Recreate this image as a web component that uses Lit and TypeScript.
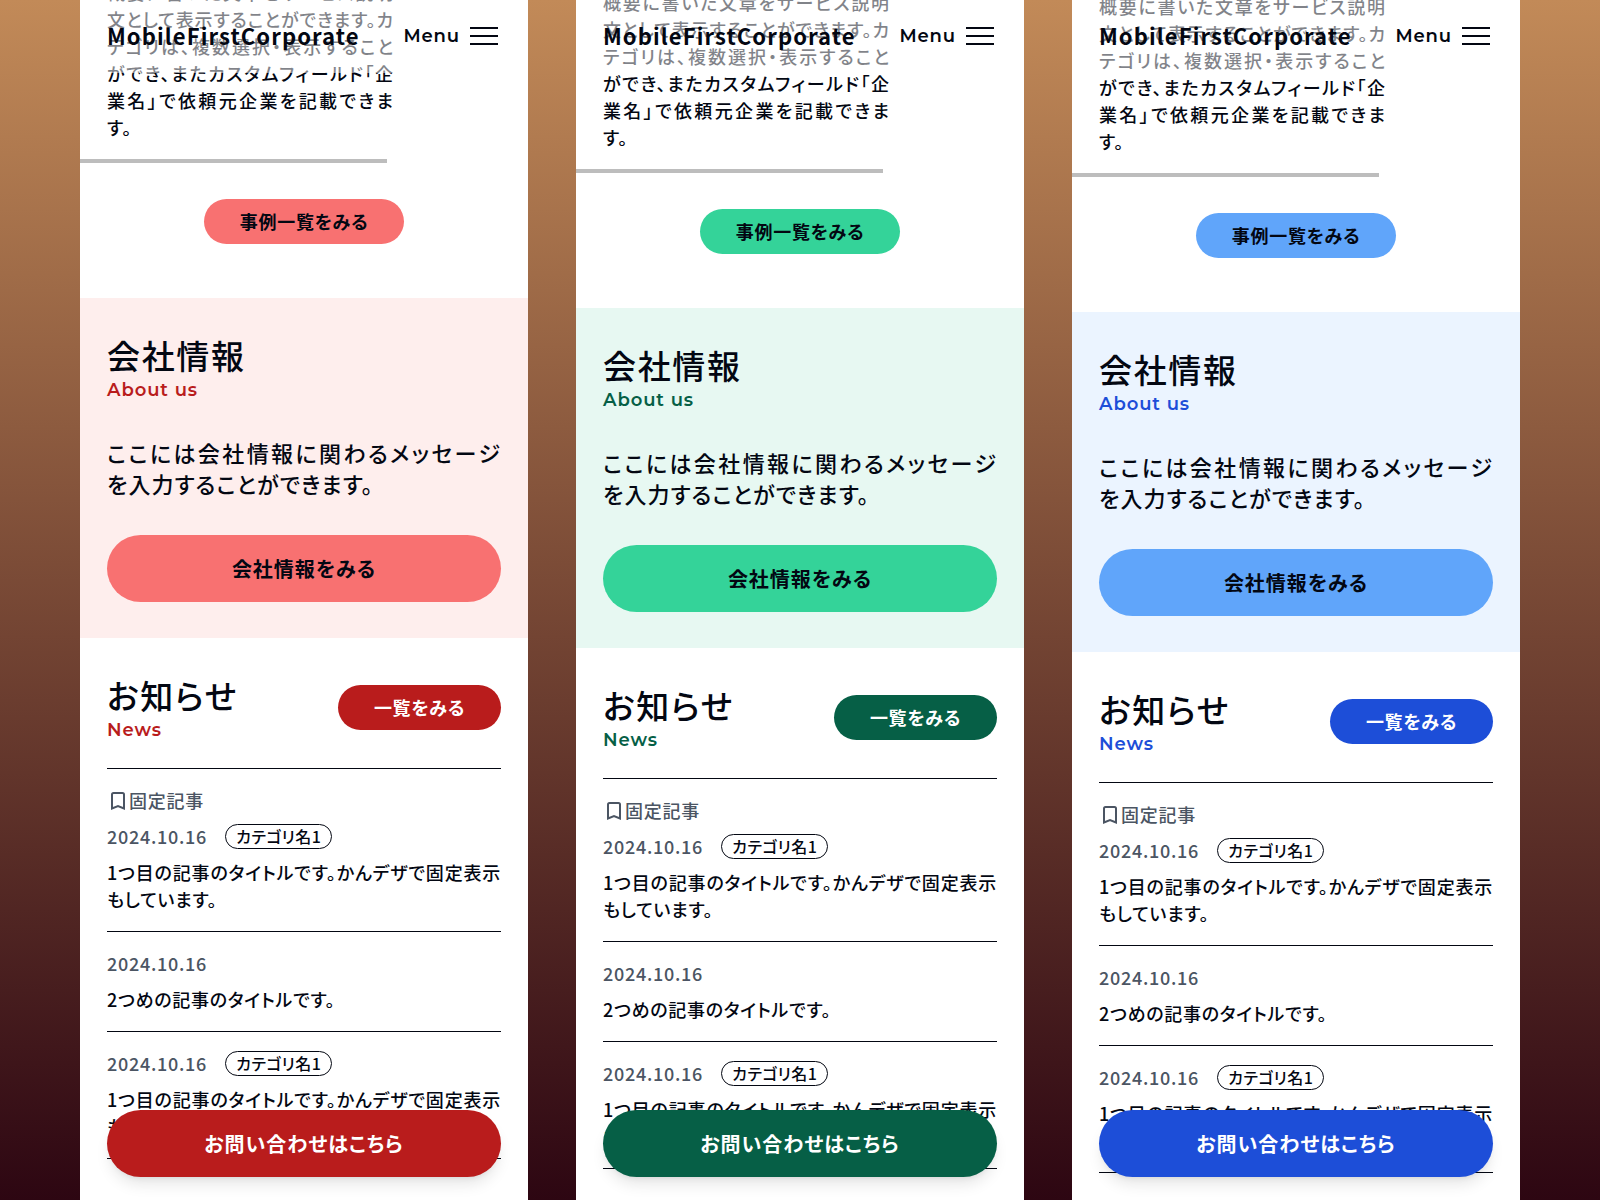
import { LitElement, html, css, nothing } from "lit";
import { customElement, property } from "lit/decorators.js";
import { styleMap } from "lit/directives/style-map.js";

interface Theme {
  name: string;
  scroll: number;
  soft: string;
  tint: string;
  deep: string;
}

interface Article {
  date: string;
  title: string;
  category?: string;
  pinned?: boolean;
}

const themes: Theme[] = [
  { name: "red", scroll: -21, soft: "#f87171", tint: "#feeeed", deep: "#b91c1c" },
  { name: "green", scroll: -11, soft: "#34d399", tint: "#e7f8f2", deep: "#065f46" },
  { name: "blue", scroll: -7, soft: "#60a5fa", tint: "#ebf4ff", deep: "#1d4ed8" },
];

const articles: Article[] = [
  { date: "2024.10.16", category: "カテゴリ名1", title: "1つ目の記事のタイトルです。かんデザで固定表示もしています。", pinned: true },
  { date: "2024.10.16", title: "2つめの記事のタイトルです。" },
  { date: "2024.10.16", category: "カテゴリ名1", title: "1つ目の記事のタイトルです。かんデザで固定表示もしています。" },
];

@customElement("phone-page")
export class PhonePage extends LitElement {
  @property({ attribute: false }) theme!: Theme;

  static styles = css`
    :host {
      display: block;
      position: relative;
      overflow: hidden;
      background: #fff;
      color: #030712;
      font-family: "Noto Sans CJK JP", "Noto Sans JP", sans-serif;
      font-size: 18px;
      font-weight: 500;
      line-height: 27px;
      letter-spacing: 0.04em;
      font-feature-settings: "palt";
    }
    a {
      color: inherit;
      text-decoration: none;
    }
    h1, h2, p, ul {
      margin: 0;
      padding: 0;
      font-weight: inherit;
    }
    .header {
      position: absolute;
      inset: 0 0 auto 0;
      z-index: 1;
      display: flex;
      align-items: center;
      justify-content: space-between;
      height: 73px;
      padding: 0 30px 2px 27px;
      box-sizing: border-box;
      background: rgb(255 255 255 / 0.5);
    }
    .header .logo {
      font-size: 22px;
      font-weight: 700;
      letter-spacing: 0.05em;
    }
    .latin, .menu {
      font-family: Montserrat, Inter, sans-serif;
      font-size: 18px;
      font-weight: 600;
      letter-spacing: 0.05em;
    }
    .menu {
      display: flex;
      align-items: center;
      gap: 10px;
      padding: 0;
      border: 0;
      background: none;
      color: inherit;
    }
    .bars {
      width: 28px;
      height: 20px;
    }
    .work {
      width: 287px;
      margin-left: 27px;
      letter-spacing: 0.05em;
      text-align: justify;
    }
    .track {
      width: 307px;
      height: 4px;
      margin-top: 18px;
      background: #bdbdbd;
    }
    .center {
      display: flex;
      justify-content: center;
      padding: 36px 0 54px;
    }
    .pill {
      display: flex;
      align-items: center;
      justify-content: center;
      box-sizing: border-box;
      height: 45px;
      padding: 0 36px;
      border-radius: 34px;
      font-weight: 700;
    }
    .large {
      height: 67px;
      font-size: 20px;
      letter-spacing: 0.05em;
    }
    .soft {
      background: var(--soft);
    }
    .deep {
      background: var(--deep);
      color: #fff;
    }
    .about {
      padding: 36px 27px;
      background: var(--tint);
    }
    .title {
      font-size: 33px;
      line-height: 42px;
      letter-spacing: 0.05em;
    }
    .latin {
      margin-top: 3px;
      color: var(--deep);
      line-height: 22px;
    }
    .message {
      margin: 36px 0;
      font-size: 22px;
      line-height: 31px;
      letter-spacing: 0.05em;
      text-align: justify;
    }
    .news {
      padding: 36px 27px;
    }
    .news-head {
      display: flex;
      align-items: center;
      justify-content: space-between;
      padding-bottom: 27px;
      border-bottom: 1px solid #030712;
    }
    .list {
      list-style: none;
    }
    .item {
      display: flex;
      flex-direction: column;
      gap: 9px;
      padding: 18px 0;
      border-bottom: 1px solid #030712;
    }
    .meta {
      display: flex;
      align-items: center;
      color: #4b5563;
    }
    .flag {
      width: 22px;
      height: 22px;
    }
    .category {
      margin-left: 18px;
      padding: 0 10px;
      border: 1px solid #030712;
      border-radius: 13px;
      color: #030712;
      font-size: 16px;
      line-height: 23px;
      letter-spacing: 0.03em;
    }
    .headline {
      text-align: justify;
    }
    .contact {
      position: absolute;
      inset: auto 27px 23px 27px;
      z-index: 1;
      box-shadow: 0 10px 15px -3px rgb(0 0 0 / 0.1), 0 4px 6px -4px rgb(0 0 0 / 0.1);
    }
  `;

  private renderArticle(a: Article) {
    return html`
      <li class="item">
        ${a.pinned
          ? html`<div class="meta">
              <svg class="flag" viewBox="0 0 22 22" fill="none" stroke="currentColor" stroke-width="2" aria-hidden="true">
                <path d="M5 18.500V4.500Q5 3 6.500 3H15.500Q17 3 17 4.500V18.500L11 16Z" />
              </svg>固定記事
            </div>`
          : nothing}
        <div class="meta">
          <time>${a.date}</time>
          ${a.category ? html`<span class="category">${a.category}</span>` : nothing}
        </div>
        <a class="headline" href="#news">${a.title}</a>
      </li>
    `;
  }

  render() {
    const t = this.theme;
    return html`
      <header class="header">
        <h1 class="logo"><a href="#top">MobileFirstCorporate</a></h1>
        <button class="menu" type="button">
          Menu
          <svg class="bars" viewBox="0 0 28 20" stroke="currentColor" stroke-width="2" aria-hidden="true">
            <path d="M0 2H28M0 10H28M0 18H28" />
          </svg>
        </button>
      </header>
      <main style=${styleMap({ marginTop: `${t.scroll}px` })}>
        <section>
          <p class="work">概要に書いた文章をサービス説明文として表示することができます。カテゴリは、複数選択・表示することができ、またカスタムフィールド「企業名」で依頼元企業を記載できます。</p>
          <div class="track"></div>
          <div class="center"><a class="pill soft" href="#works">事例一覧をみる</a></div>
        </section>
        <section class="about">
          <h2 class="title">会社情報</h2>
          <p class="latin">About us</p>
          <p class="message">ここには会社情報に関わるメッセージを入力することができます。</p>
          <a class="pill large soft" href="#about">会社情報をみる</a>
        </section>
        <section class="news">
          <div class="news-head">
            <div>
              <h2 class="title">お知らせ</h2>
              <p class="latin">News</p>
            </div>
            <a class="pill deep" href="#news">一覧をみる</a>
          </div>
          <ul class="list">${articles.map((a) => this.renderArticle(a))}</ul>
        </section>
      </main>
      <a class="pill large deep contact" href="#contact">お問い合わせはこちら</a>
    `;
  }
}

@customElement("app-root")
export class AppRoot extends LitElement {
  static styles = css`
    :host {
      display: grid;
      grid-template-columns: repeat(3, minmax(0, 1fr));
      grid-template-rows: minmax(0, 1fr);
      gap: 48px;
      box-sizing: border-box;
      height: 100vh;
      padding: 0 5%;
      background: linear-gradient(#c28a58, #2d0612);
    }
  `;

  render() {
    return themes.map(
      (t) => html`<phone-page
        .theme=${t}
        style=${styleMap({ "--soft": t.soft, "--tint": t.tint, "--deep": t.deep })}
      ></phone-page>`
    );
  }
}
